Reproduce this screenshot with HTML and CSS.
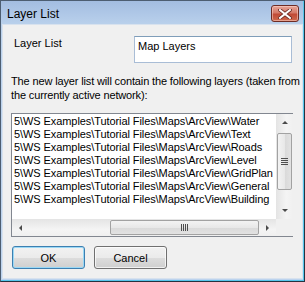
FILE: index.html
```html
<!DOCTYPE html>
<html lang="en">
<head>
    <meta charset="UTF-8">
    <title>Layer List</title>
    <link rel="stylesheet" href="styles.css">
</head>
<body>
    <div class="window">
        <div class="titlebar">
            <span class="title">Layer List</span>
            <div class="close-btn">
                <svg width="14" height="10" viewBox="0 0 14 10">
                    <path d="M2 1 L12 9 M12 1 L2 9" stroke="#6b2a22" stroke-width="3.6" stroke-linecap="square"/>
                    <path d="M2 1 L12 9 M12 1 L2 9" stroke="#fff" stroke-width="2" stroke-linecap="square"/>
                </svg>
            </div>
        </div>

        <div class="client">
            <div class="name-row">
                <label class="name-label">Layer List</label>
                <div class="textbox">Map Layers</div>
            </div>

            <p class="info">The new layer list will contain the following layers (taken from<br>the currently active network):</p>

            <div class="listbox">
                <ul class="items">
                    <li>5\WS Examples\Tutorial Files\Maps\ArcView\Water</li>
                    <li>5\WS Examples\Tutorial Files\Maps\ArcView\Text</li>
                    <li>5\WS Examples\Tutorial Files\Maps\ArcView\Roads</li>
                    <li>5\WS Examples\Tutorial Files\Maps\ArcView\Level</li>
                    <li>5\WS Examples\Tutorial Files\Maps\ArcView\GridPlan</li>
                    <li>5\WS Examples\Tutorial Files\Maps\ArcView\General</li>
                    <li>5\WS Examples\Tutorial Files\Maps\ArcView\Building</li>
                </ul>
                <div class="vscroll">
                    <div class="arrow-btn"><span class="arrow up"></span></div>
                    <div class="track">
                        <div class="thumb vthumb"><span class="grip vgrip"></span></div>
                    </div>
                    <div class="arrow-btn"><span class="arrow down"></span></div>
                </div>
                <div class="hscroll">
                    <div class="arrow-btn"><span class="arrow left"></span></div>
                    <div class="track">
                        <div class="thumb hthumb"><span class="grip hgrip"></span></div>
                    </div>
                    <div class="arrow-btn"><span class="arrow right"></span></div>
                </div>
                <div class="corner"></div>
            </div>

            <div class="buttons">
                <button class="btn btn-default">OK</button>
                <button class="btn">Cancel</button>
            </div>
        </div>
    </div>
</body>
</html>
```

FILE: styles.css
```css
body {
    margin: 0;
    font-family: "Liberation Sans", Arial, sans-serif;
    font-size: 11px;
    color: #000;
}

.window {
    width: 305px;
    height: 282px;
    box-sizing: border-box;
    border: 1px solid #4d5e72;
    border-bottom-color: #26323f;
    border-right-color: #26323f;
    padding: 0 1px 2px 1px;
    background: linear-gradient(#a3bde1, #bad1ec 24px, #bcd3ee);
    box-shadow: inset -1px -1px 0 #56c6ec;
    display: flex;
    flex-direction: column;
}

/* Title bar */
.titlebar {
    height: 23px;
    display: flex;
    align-items: flex-start;
}

.title {
    font-size: 12px;
    padding: 6px 0 0 5px;
    color: #000;
}

.close-btn {
    margin: 4px 4px 0 auto;
    width: 28px;
    height: 17px;
    box-sizing: border-box;
    border: 1px solid #6e2c24;
    border-radius: 3px;
    background: linear-gradient(#e7a698, #d57a69 45%, #c14a36 55%, #cf6a4e);
    box-shadow: inset 0 0 0 1px rgba(255, 220, 210, 0.5);
    display: flex;
    align-items: center;
    justify-content: center;
}

/* Client area */
.client {
    flex: 1;
    background-color: #f0f0f0;
    border: 1px solid #d8e2ee;
    padding: 11px 9px 0 8px;
}

.name-row {
    display: flex;
    align-items: flex-start;
    height: 27px;
}

.name-label {
    margin: 1px 0 0 3px;
    line-height: 13px;
}

.textbox {
    margin-left: auto;
    margin-right: 1px;
    width: 158px;
    height: 27px;
    box-sizing: border-box;
    border: 1px solid #a9bdd6;
    border-top-color: #7f9db9;
    background-color: #fff;
    padding: 3px 3px 1px;
    line-height: 13px;
}

.info {
    margin: 11px 0 0 0;
    line-height: 14px;
    letter-spacing: -0.14px;
    white-space: nowrap;
}

/* List box */
.listbox {
    margin-top: 11px;
    height: 124px;
    box-sizing: border-box;
    border: 1px solid #828790;
    background-color: #fff;
    display: grid;
    grid-template-columns: 1fr 17px;
    grid-template-rows: 1fr 17px;
}

.items {
    list-style: none;
    margin: 0;
    padding: 1px 0 0 2px;
    overflow: hidden;
    white-space: nowrap;
    line-height: 13px;
    letter-spacing: -0.08px;
}

.vscroll {
    display: flex;
    flex-direction: column;
    background: linear-gradient(to right, #e4e4e4, #f4f4f4 60%, #f0f0f0);
}

.hscroll {
    display: flex;
    background: linear-gradient(#e4e4e4, #f4f4f4 60%, #f0f0f0);
}

.corner {
    background-color: #f0f0f0;
}

.arrow-btn {
    width: 17px;
    height: 17px;
    flex: none;
    display: flex;
    align-items: center;
    justify-content: center;
}

.track {
    flex: 1;
    display: flex;
}

.vscroll .track {
    flex-direction: column;
}

.thumb {
    box-sizing: border-box;
    border: 1px solid #a2a2a2;
    border-radius: 2px;
    display: flex;
    align-items: center;
    justify-content: center;
}

.vthumb {
    margin: 2px 1px 0 1px;
    height: 57px;
    background: linear-gradient(to right, #f3f3f3, #e8e8e8 50%, #d9d9d9 51%, #e2e2e2);
}

.hthumb {
    margin: 1px 0 1px 81px;
    width: 149px;
    background: linear-gradient(#f3f3f3, #e8e8e8 50%, #d9d9d9 51%, #e2e2e2);
}

.grip {
    display: block;
}

.vgrip {
    width: 7px;
    height: 7px;
    background: repeating-linear-gradient(#4f4f4f 0 1px, transparent 1px 2px);
}

.hgrip {
    width: 7px;
    height: 7px;
    background: repeating-linear-gradient(to right, #4f4f4f 0 1px, transparent 1px 2px);
}

.arrow {
    width: 0;
    height: 0;
    border: 3px solid transparent;
}

.arrow.up {
    border-bottom: 3px solid #4a4a4a;
    border-top-width: 0;
}

.arrow.down {
    border-top: 3px solid #4a4a4a;
    border-bottom-width: 0;
}

.arrow.left {
    border-right: 3px solid #4a4a4a;
    border-left-width: 0;
}

.arrow.right {
    border-left: 3px solid #4a4a4a;
    border-right-width: 0;
}

/* Buttons */
.buttons {
    margin: 9px 0 0 1px;
    display: flex;
    gap: 9px;
}

.btn {
    width: 73px;
    height: 23px;
    font-family: "Liberation Sans", Arial, sans-serif;
    font-size: 11px;
    color: #000;
    border: 1px solid #707070;
    border-radius: 3px;
    background: linear-gradient(#f2f2f2, #ebebeb 50%, #dddddd 51%, #cfcfcf);
    box-shadow: inset 0 0 0 1px rgba(255, 255, 255, 0.7);
    padding: 0;
}

.btn-default {
    border-color: #3c7fb1;
    box-shadow: inset 0 0 0 1px #9ad8f5;
}
```
